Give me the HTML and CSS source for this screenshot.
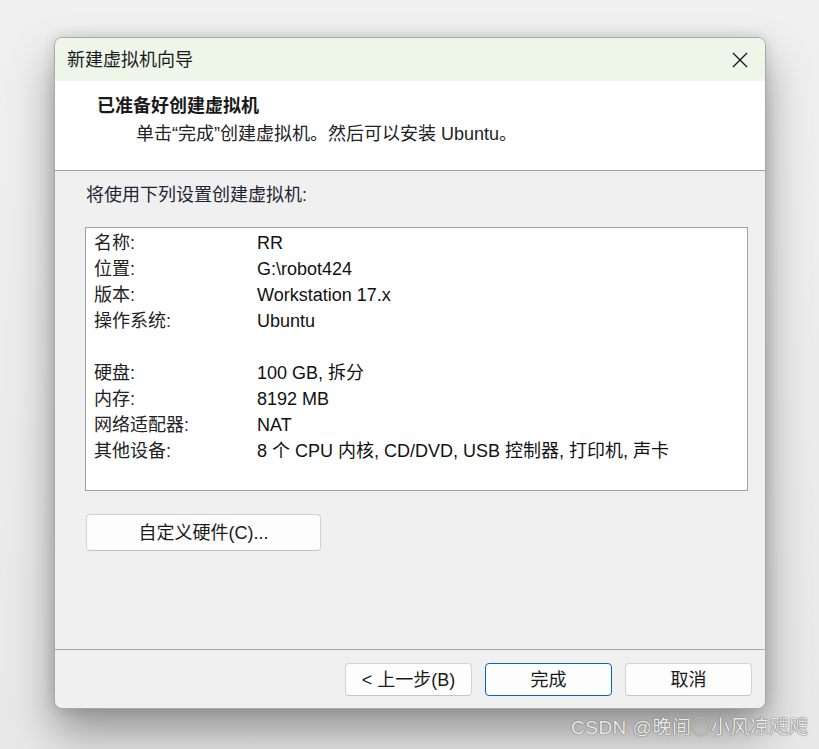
FILE: index.html
```html
<!DOCTYPE html>
<html lang="zh-CN">
<head>
<meta charset="utf-8">
<title>新建虚拟机向导</title>
<link rel="stylesheet" href="styles.css">
</head>
<body>
<div class="window">
  <div class="titlebar">
    <span class="title">新建虚拟机向导</span>
    <svg class="close" width="16" height="16" viewBox="0 0 16 16"><path d="M1 1 L15 15 M15 1 L1 15" stroke="#1a1a1a" stroke-width="1.4" fill="none"/></svg>
  </div>
  <div class="header">
    <div class="h-title">已准备好创建虚拟机</div>
    <div class="h-sub">单击“完成”创建虚拟机。然后可以安装 Ubuntu。</div>
  </div>
  <div class="content">
    <div class="intro">将使用下列设置创建虚拟机:</div>
    <div class="summary">
      <div class="row"><span class="k">名称:</span><span class="v">RR</span></div>
      <div class="row"><span class="k">位置:</span><span class="v">G:\robot424</span></div>
      <div class="row"><span class="k">版本:</span><span class="v">Workstation 17.x</span></div>
      <div class="row"><span class="k">操作系统:</span><span class="v">Ubuntu</span></div>
      <div class="row"><span class="k"></span><span class="v"></span></div>
      <div class="row"><span class="k">硬盘:</span><span class="v">100 GB, 拆分</span></div>
      <div class="row"><span class="k">内存:</span><span class="v">8192 MB</span></div>
      <div class="row"><span class="k">网络适配器:</span><span class="v">NAT</span></div>
      <div class="row"><span class="k">其他设备:</span><span class="v">8 个 CPU 内核, CD/DVD, USB 控制器, 打印机, 声卡</span></div>
    </div>
    <button class="btn custom">自定义硬件(C)...</button>
  </div>
  <div class="footer">
    <button class="btn">&lt; 上一步(B)</button>
    <button class="btn primary">完成</button>
    <button class="btn">取消</button>
  </div>
</div>
<div class="watermark">CSDN @晚间◯小风凉飕飕</div>
</body>
</html>
```

FILE: styles.css
```css
* { box-sizing: border-box; }
html, body { margin: 0; padding: 0; }
body {
  width: 819px;
  height: 749px;
  overflow: hidden;
  position: relative;
  background: linear-gradient(#f0f0f0, #e8e8e8);
  font-family: "Liberation Sans", "Noto Sans CJK SC", sans-serif;
  font-size: 18px;
  color: #1a1a1a;
  padding: 37px 0 0 54px;
}
.window {
  width: 712px;
  height: 672px;
  border: 1px solid #a9a9a9;
  border-radius: 8px;
  background: #f0f0f0;
  overflow: hidden;
  display: flex;
  flex-direction: column;
  box-shadow: 0 24px 44px rgba(0,0,0,0.36), 0 0 14px rgba(0,0,0,0.14);
}
.titlebar {
  height: 43px;
  flex: none;
  background: #eef6ea;
  display: flex;
  align-items: center;
  justify-content: space-between;
  padding: 0 17px 0 12px;
}
.title { line-height: 24px; }
.close { display: block; }
.header {
  height: 90px;
  flex: none;
  background: #ffffff;
  border-bottom: 1px solid #a0a0a0;
  padding: 13px 0 0 42px;
}
.h-title { font-weight: bold; line-height: 24px; }
.h-sub { line-height: 24px; margin-top: 4px; padding-left: 39px; color: #222; }
.content {
  flex: 1;
  padding: 12px 0 0 30px;
}
.intro { line-height: 24px; padding-left: 1px; color: #1c2433; }
.summary {
  margin-top: 20px;
  width: 663px;
  height: 264px;
  background: #fff;
  border: 1px solid #a0a0a0;
  padding: 2px 0 0 8px;
}
.row { display: flex; height: 26px; line-height: 26px; white-space: nowrap; }
.k { width: 163px; flex: none; color: #222; }
.v { color: #111; }
.btn {
  font: inherit;
  color: #1a1a1a;
  background: #fdfdfd;
  border: 1px solid #d3d3d3;
  border-bottom-color: #c4c4c4;
  border-radius: 4px;
  padding: 0;
  line-height: 24px;
}
.custom {
  display: block;
  margin: 23px 0 0 1px;
  width: 235px;
  height: 37px;
}
.footer {
  height: 59px;
  flex: none;
  border-top: 1px solid #a8a8a8;
  display: flex;
  justify-content: flex-end;
  gap: 13px;
  padding: 13px 13px 0 0;
}
.footer .btn { width: 127px; height: 33px; }
.primary { border: 1px solid #0067c0; }
.watermark {
  position: absolute;
  left: 571px;
  top: 715px;
  font-size: 19px;
  line-height: 26px;
  letter-spacing: 0.5px;
  color: #ececec;
  text-shadow: 0 0 1px #5f5f5f, 0 0 1px #5f5f5f;
  white-space: nowrap;
}
```
